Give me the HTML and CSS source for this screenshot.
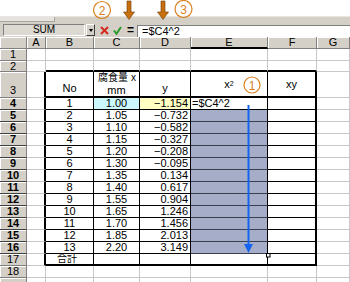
FILE: index.html
```html
<!DOCTYPE html>
<html lang="ja">
<head>
<meta charset="utf-8">
<title>Excel</title>
<link rel="stylesheet" href="styles.css">
</head>
<body>
<div class="top"></div>
<div class="strip"><div class="tb-end"></div></div>
<div class="fbar">
  <div class="namebox">SUM</div>
  <div class="dd"><span class="tri"></span></div>
  <svg class="btn-x" width="9" height="9" viewBox="0 0 9 9"><path d="M1 1 L8 8 M8 1 L1 8" stroke="#d42a1e" stroke-width="2" fill="none"/></svg>
  <svg class="btn-ok" width="9" height="9" viewBox="0 0 9 9"><path d="M1 4.5 L3.5 7.8 L8 1" stroke="#2a9a2a" stroke-width="2" fill="none"/></svg>
  <span class="btn-eq">=</span>
  <div class="finput">=$C4^2</div>
</div>
<div class="sheet">
  <div class="h corner"></div><div class="h">A</div><div class="h">B</div><div class="h">C</div><div class="h">D</div><div class="h s">E</div><div class="h">F</div><div class="h">G</div>

  <div class="r">1</div><div class="c"></div><div class="c"></div><div class="c"></div><div class="c"></div><div class="c"></div><div class="c"></div><div class="c"></div>

  <div class="r">2</div><div class="c"></div><div class="c et"></div><div class="c et"></div><div class="c et"></div><div class="c et"></div><div class="c et"></div><div class="c"></div>

  <div class="r r3">3</div><div class="c el"></div><div class="c t hdr ctr">No</div><div class="c t hdr stack"><span class="kj">腐食量 x</span><span>mm</span></div><div class="c t hdr ctr">y</div><div class="c t hdr mid ctr">x<sup>2</sup></div><div class="c t hdr mid ctr er">xy</div><div class="c"></div>

  <div class="r s">4</div><div class="c el"></div><div class="c t ctr">1</div><div class="c t ctr cyan">1.00</div><div class="c t rt yel">−1.154</div><div class="c t active">=$C4^2</div><div class="c t er"></div><div class="c"></div>
  <div class="r s">5</div><div class="c el"></div><div class="c t ctr">2</div><div class="c t ctr">1.05</div><div class="c t rt">−0.732</div><div class="c t fill"></div><div class="c t er"></div><div class="c"></div>
  <div class="r s">6</div><div class="c el"></div><div class="c t ctr">3</div><div class="c t ctr">1.10</div><div class="c t rt">−0.582</div><div class="c t fill"></div><div class="c t er"></div><div class="c"></div>
  <div class="r s">7</div><div class="c el"></div><div class="c t ctr">4</div><div class="c t ctr">1.15</div><div class="c t rt">−0.327</div><div class="c t fill"></div><div class="c t er"></div><div class="c"></div>
  <div class="r s">8</div><div class="c el"></div><div class="c t ctr">5</div><div class="c t ctr">1.20</div><div class="c t rt">−0.208</div><div class="c t fill"></div><div class="c t er"></div><div class="c"></div>
  <div class="r s">9</div><div class="c el"></div><div class="c t ctr">6</div><div class="c t ctr">1.30</div><div class="c t rt">−0.095</div><div class="c t fill"></div><div class="c t er"></div><div class="c"></div>
  <div class="r s">10</div><div class="c el"></div><div class="c t ctr">7</div><div class="c t ctr">1.35</div><div class="c t rt">0.134</div><div class="c t fill"></div><div class="c t er"></div><div class="c"></div>
  <div class="r s">11</div><div class="c el"></div><div class="c t ctr">8</div><div class="c t ctr">1.40</div><div class="c t rt">0.617</div><div class="c t fill"></div><div class="c t er"></div><div class="c"></div>
  <div class="r s">12</div><div class="c el"></div><div class="c t ctr">9</div><div class="c t ctr">1.55</div><div class="c t rt">0.904</div><div class="c t fill"></div><div class="c t er"></div><div class="c"></div>
  <div class="r s">13</div><div class="c el"></div><div class="c t ctr">10</div><div class="c t ctr">1.65</div><div class="c t rt">1.246</div><div class="c t fill"></div><div class="c t er"></div><div class="c"></div>
  <div class="r s">14</div><div class="c el"></div><div class="c t ctr">11</div><div class="c t ctr">1.70</div><div class="c t rt">1.456</div><div class="c t fill"></div><div class="c t er"></div><div class="c"></div>
  <div class="r s">15</div><div class="c el"></div><div class="c t ctr">12</div><div class="c t ctr">1.85</div><div class="c t rt">2.013</div><div class="c t fill"></div><div class="c t er"></div><div class="c"></div>
  <div class="r s">16</div><div class="c el"></div><div class="c t ctr">13</div><div class="c t ctr">2.20</div><div class="c t rt">3.149</div><div class="c t fill"></div><div class="c t er"></div><div class="c"></div>

  <div class="r">17</div><div class="c el"></div><div class="c t eb total">合計</div><div class="c t eb"></div><div class="c t eb"></div><div class="c t eb"></div><div class="c t eb er"></div><div class="c"></div>

  <div class="r">18</div><div class="c"></div><div class="c"></div><div class="c"></div><div class="c"></div><div class="c"></div><div class="c"></div><div class="c"></div>
  <div class="r"></div><div class="c"></div><div class="c"></div><div class="c"></div><div class="c"></div><div class="c"></div><div class="c"></div><div class="c"></div>
</div>

<svg class="notes" width="350" height="282" viewBox="0 0 350 282">
  <g class="circ">
    <circle cx="102" cy="10" r="8.5"/>
    <circle cx="183.5" cy="9" r="8.5"/>
    <circle cx="252" cy="85" r="8"/>
  </g>
  <g class="circ-t">
    <text x="102" y="14.5">2</text>
    <text x="183.5" y="13.5">3</text>
    <text x="252" y="89.5">1</text>
  </g>
  <g class="darr">
    <polygon points="127,1 131,1 131,12 134.5,12 129,19.5 123.5,12 127,12"/>
    <polygon points="161,1 165,1 165,12 168.5,12 163,19.5 157.5,12 161,12"/>
  </g>
  <line x1="248.5" y1="105" x2="248.5" y2="246" stroke="#1464f0" stroke-width="2"/>
  <polygon points="244,244 253,244 248.5,253" fill="#1464f0"/>
  <rect x="266.5" y="253.5" width="3.5" height="3.5" fill="#fff" stroke="#000" stroke-width="1"/>
</svg>
</body>
</html>
```

FILE: styles.css
```css
body {
  margin: 0;
  width: 350px;
  height: 282px;
  overflow: hidden;
  background: #fff;
  position: relative;
  font-family: "Liberation Sans", "Noto Sans CJK JP", sans-serif;
  font-size: 11px;
  color: #000;
}

.top {
  height: 16px;
  background: #fff;
}

.strip {
  height: 7px;
  background: #d4d0c8;
  border-top: 1px solid #e8e6e2;
  box-sizing: border-box;
}

.tb-end {
  width: 54px;
  height: 4px;
  background: #e6e3de;
  border-right: 1px solid #a8a6a0;
  border-bottom: 1px solid #a8a6a0;
}

.fbar {
  height: 14px;
  background: #d4d0c8;
  display: flex;
  align-items: flex-start;
}

.namebox {
  margin: 1px 0 0 3px;
  width: 82px;
  height: 12px;
  box-sizing: border-box;
  border: 1px solid;
  border-color: #808080 #fff #fff #808080;
  background: #dcd9d3;
  font-size: 10px;
  line-height: 10px;
  text-align: center;
}

.dd {
  margin: 1px 0 0 1px;
  width: 9px;
  height: 12px;
  box-sizing: border-box;
  border: 1px solid;
  border-color: #fff #404040 #404040 #fff;
  background: #d4d0c8;
  display: flex;
  align-items: center;
  justify-content: center;
}

.tri {
  width: 0;
  height: 0;
  border-left: 2.5px solid transparent;
  border-right: 2.5px solid transparent;
  border-top: 3px solid #000;
}

.btn-x {
  margin: 3px 0 0 5px;
}

.btn-ok {
  margin: 3px 0 0 4px;
}

.btn-eq {
  margin: 0 0 0 5px;
  font-weight: bold;
  font-size: 12px;
  line-height: 14px;
}

.finput {
  margin: 2px 0 0 3px;
  flex: 1;
  height: 12px;
  background: #fff;
  border-top: 1px solid #808080;
  border-left: 1px solid #808080;
  box-sizing: border-box;
  padding-left: 4px;
  line-height: 11px;
  font-size: 11px;
}

.sheet {
  display: grid;
  grid-template-columns: 27px 19px 48px 46px 51px 77px 49px 33px;
  grid-template-rows: 12px 12px 11px 26px repeat(16, 12px);
}

.sheet > div {
  box-sizing: border-box;
  overflow: hidden;
  white-space: nowrap;
}

.h, .r {
  background: #d4d0c8;
  border-right: 1px solid #808080;
  border-bottom: 1px solid #808080;
  box-shadow: inset 1px 1px 0 #fff;
  display: flex;
  align-items: center;
  justify-content: center;
  line-height: 11px;
  font-size: 11px;
}

.h.s {
  border-bottom: 2px solid #000;
}

.r.s {
  font-weight: bold;
  border-bottom-color: #404040;
}

.r3 {
  align-items: flex-end;
  padding-bottom: 1px;
}

.c {
  border-right: 1px solid #c8c8c8;
  border-bottom: 1px solid #c8c8c8;
  display: flex;
  align-items: center;
  line-height: 11px;
}

.t {
  border-right-color: #000;
  border-bottom-color: #000;
}

.el {
  border-right: 2px solid #000;
}

.et {
  border-bottom: 2px solid #000;
}

.er {
  border-right: 2px solid #000;
}

.eb {
  border-bottom: 2px solid #000;
}

.hdr {
  border-bottom: 2px solid #000;
  align-items: flex-end;
  padding-bottom: 2px;
}

.hdr.mid {
  align-items: center;
  padding-bottom: 0;
}

.stack {
  flex-direction: column;
  align-items: center;
  justify-content: center;
  padding-bottom: 0;
  line-height: 12px;
}

.kj {
  font-size: 10px;
  padding-left: 1px;
}

.total {
  padding-left: 11px;
  font-size: 10px;
  line-height: 10px;
}

sup {
  font-size: 7px;
  line-height: 0;
  vertical-align: 4px;
}

.ctr {
  justify-content: center;
}

.rt {
  justify-content: flex-end;
  padding-right: 2px;
}

.cyan {
  background: #ccf8fc;
}

.yel {
  background: #ffffc4;
}

.active {
  padding-left: 1px;
  background: #fff;
}

.fill {
  background: #a6adc9;
  border-bottom-color: #3c3f52;
}

.notes {
  position: absolute;
  top: 0;
  left: 0;
  pointer-events: none;
}

.circ circle {
  fill: none;
  stroke: #d8801e;
  stroke-width: 1.2;
}

.circ-t text {
  fill: #d8801e;
  font-family: "Liberation Sans", sans-serif;
  font-size: 12px;
  text-anchor: middle;
}

.darr polygon {
  fill: #c8700e;
  stroke: #6a3a08;
  stroke-width: 0.6;
}
```
